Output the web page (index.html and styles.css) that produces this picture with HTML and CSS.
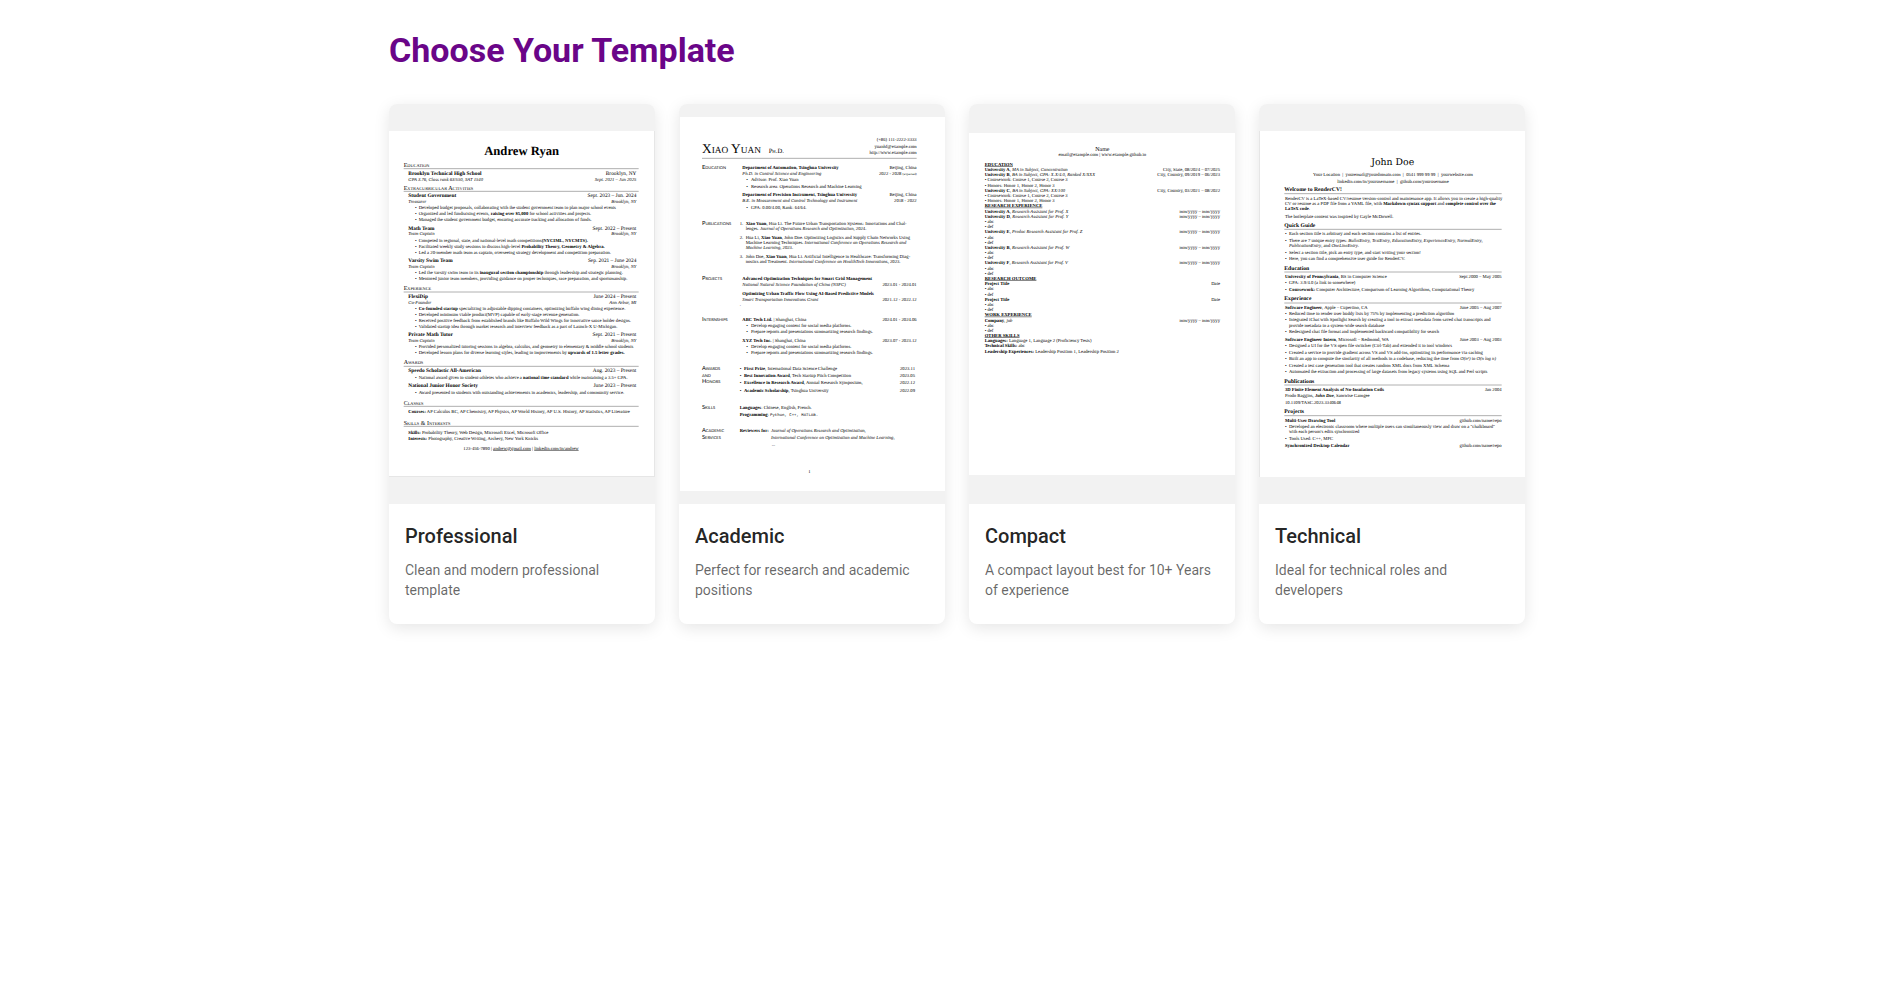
FILE: index.html
```html
<!DOCTYPE html>
<html lang="en">
<head>
<meta charset="utf-8">
<title>Choose Your Template</title>
<link rel="stylesheet" href="styles.css">
</head>
<body>
<main class="page">
<h1 class="page-title">Choose Your Template</h1>
<div class="templates">

<a class="card" href="#professional">
<svg class="preview modern" viewBox="12 12 798 1200" role="img" aria-label="Professional preview">
<rect class="edge" x="12" y="93" width="798" height="1038"/>
<rect class="sheet" x="12" y="93" width="795" height="1035"/>
<text class="name b mid" x="410" y="165">Andrew Ryan</text>
<g class="head">
<text x="56" y="201">Education</text>
<text x="56" y="269">Extracurricular Activities</text>
<text x="56" y="570">Experience</text>
<text x="56" y="793">Awards</text>
<text x="56" y="914">Classes</text>
<text x="56" y="974">Skills &amp; Interests</text>
</g>
<path class="rule" d="M56 206H761M56 274H761M56 576H761M56 799H761M56 919H761M56 979H761"/>
<g class="org b">
<text x="70" y="224">Brooklyn Technical High School</text>
<text x="70" y="292">Student Government</text>
<text x="70" y="389">Math Team</text>
<text x="70" y="485">Varsity Swim Team</text>
<text x="70" y="594">FlexiDip</text>
<text x="70" y="708">Private Math Tutor</text>
<text x="70" y="817">Speedo Scholastic All-American</text>
<text x="70" y="862">National Junior Honor Society</text>
</g>
<g class="date end">
<text x="754" y="224">Brooklyn, NY</text>
<text x="754" y="292">Sept. 2023 – Jun. 2024</text>
<text x="754" y="389">Sept. 2022 – Present</text>
<text x="754" y="485">Sep. 2021 – June 2024</text>
<text x="754" y="594">June 2024 – Present</text>
<text x="754" y="708">Sept. 2021 – Present</text>
<text x="754" y="817">Aug. 2023 – Present</text>
<text x="754" y="862">June 2023 – Present</text>
</g>
<g class="i">
<text x="70" y="242">GPA 3.76, Class rank 63/550, SAT 1540</text>
<text x="70" y="310">Treasurer</text>
<text x="70" y="406">Team Captain</text>
<text x="70" y="503">Team Captain</text>
<text x="70" y="612">Co-Founder</text>
<text x="70" y="726">Team Captain</text>
</g>
<g class="i end">
<text x="754" y="242">Sept. 2021 – Jun 2025</text>
<text x="754" y="310">Brooklyn, NY</text>
<text x="754" y="406">Brooklyn, NY</text>
<text x="754" y="503">Brooklyn, NY</text>
<text x="754" y="612">Ann Arbor, MI</text>
<text x="754" y="726">Brooklyn, NY</text>
</g>
<g>
<text x="90" y="328">•</text><text x="101" y="328">Developed budget proposals, collaborating with the student government team to plan major school events</text>
<text x="90" y="346">•</text><text x="101" y="346">Organized and led fundraising events, <tspan class="b">raising over $5,000</tspan> for school activities and projects.</text>
<text x="90" y="364">•</text><text x="101" y="364">Managed the student government budget, ensuring accurate tracking and allocation of funds.</text>
<text x="90" y="425">•</text><text x="101" y="425">Competed in regional, state, and national-level math competitions<tspan class="b">(NYCIML, NYCMTS).</tspan></text>
<text x="90" y="443">•</text><text x="101" y="443">Facilitated weekly study sessions to discuss high-level <tspan class="b">Probability Theory, Geometry &amp; Algebra.</tspan></text>
<text x="90" y="461">•</text><text x="101" y="461">Led a 20-member math team as captain, overseeing strategy development and competition preparation.</text>
<text x="90" y="522">•</text><text x="101" y="522">Led the varsity swim team to its <tspan class="b">inaugural section championship</tspan> through leadership and strategic planning.</text>
<text x="90" y="540">•</text><text x="101" y="540">Mentored junior team members, providing guidance on proper techniques, race preparation, and sportsmanship.</text>
<text x="90" y="630">•</text><text x="101" y="630"><tspan class="b">Co-founded startup</tspan> specializing in adjustable dipping containers, optimizing buffalo wing dining experience.</text>
<text x="90" y="648">•</text><text x="101" y="648">Developed minimum viable product(MVP) capable of early-stage revenue generation.</text>
<text x="90" y="666">•</text><text x="101" y="666">Received positive feedback from established brands like Buffalo Wild Wings for innovative sauce holder designs.</text>
<text x="90" y="684">•</text><text x="101" y="684">Validated startup idea through market research and interview feedback as a part of Launch-X U-Michigan.</text>
<text x="90" y="744">•</text><text x="101" y="744">Provided personalized tutoring sessions in algebra, calculus, and geometry to elementary &amp; middle school students</text>
<text x="90" y="762">•</text><text x="101" y="762">Developed lesson plans for diverse learning styles, leading to improvements by <tspan class="b">upwards of 1.5 letter grades.</tspan></text>
<text x="90" y="838">•</text><text x="101" y="838">National award given to student-athletes who achieve a <tspan class="b">national time standard</tspan> while maintaining a 3.5+ GPA.</text>
<text x="90" y="883">•</text><text x="101" y="883">Award presented to students with outstanding achievements in academics, leadership, and community service.</text>
<text x="70" y="940"><tspan class="b">Courses:</tspan> AP Calculus BC, AP Chemistry, AP Physics, AP World History, AP U.S. History, AP Statistics, AP Literature</text>
<text x="70" y="1001"><tspan class="b">Skills:</tspan> Probability Theory, Web Design, Microsoft Excel, Microsoft Office</text>
<text x="70" y="1021"><tspan class="b">Interests:</tspan> Photography, Creative Writing, Archery, New York Knicks</text>
<text class="mid" x="408" y="1050">123-456-7890 | <tspan class="u">andrew@gmail.com</tspan> | <tspan class="u">linkedin.com/in/andrew</tspan></text>
</g>
</svg>
<span class="card-body">
<span class="card-title">Professional</span>
<span class="card-text">Clean and modern professional template</span>
</span>
</a>

<a class="card" href="#academic">
<svg class="preview academic" viewBox="12 12 798 1200" role="img" aria-label="Academic preview">
<rect class="sheet" x="15" y="51" width="795" height="1122"/>
<text class="name sc" x="81" y="160">Xiao Yuan</text>
<text class="degree sc" x="281" y="160">Ph.D.</text>
<g class="end">
<text x="725" y="124">(+86) 111-2222-3333</text>
<text x="725" y="143">yuanhf@example.com</text>
<text x="725" y="162">http://www.example.com</text>
</g>
<path class="rule" d="M81 175H725"/>
<g class="head">
<text x="81" y="206">Education</text>
<text x="81" y="375">Publications</text>
<text x="81" y="539">Projects</text>
<text x="81" y="663">Internships</text>
<text x="81" y="811">Awards</text>
<text x="81" y="830">and</text>
<text x="81" y="850">Honors</text>
<text x="81" y="926">Skills</text>
<text x="81" y="997">Academic</text>
<text x="81" y="1016">Services</text>
</g>
<g class="b">
<text x="202" y="206">Department of Automation, Tsinghua University</text>
<text x="202" y="288">Department of Precision Instrument, Tsinghua University</text>
<text x="202" y="540">Advanced Optimization Techniques for Smart Grid Management</text>
<text x="202" y="585">Optimizing Urban Traffic Flow Using AI-Based Predictive Models</text>
</g>
<g class="i">
<text x="202" y="225">Ph.D. in Control Science and Engineering</text>
<text x="202" y="307">B.E. in Measurement and Control Technology and Instrument</text>
<text x="202" y="558">National Natural Science Foundation of China (NSFC)</text>
<text x="202" y="603">Smart Transportation Innovations Grant</text>
</g>
<g class="end">
<text x="725" y="206">Beijing, China</text>
<text x="725" y="225">2022 - 2028 <tspan class="tiny">(expected)</tspan></text>
<text x="725" y="288">Beijing, China</text>
<text x="725" y="307">2018 - 2022</text>
<text x="725" y="558">2023.01 - 2024.01</text>
<text x="725" y="603">2021.12 - 2022.12</text>
<text x="725" y="663">2024.01 - 2024.06</text>
<text x="725" y="725">2023.07 - 2023.12</text>
<text x="720" y="811">2023.11</text>
<text x="720" y="832">2023.05</text>
<text x="720" y="853">2022.12</text>
<text x="720" y="875">2022.09</text>
</g>
<g>
<text x="214" y="244">•</text><text x="228" y="244">Advisor: Prof. Xiao Yuan</text>
<text x="214" y="263">•</text><text x="228" y="263">Research area: Operations Research and Machine Learning</text>
<text x="214" y="326">•</text><text x="228" y="326">GPA: 0.00/4.00, Rank: 64/64.</text>
<text x="194" y="374">1.</text><text x="212" y="374"><tspan class="b">Xiao Yuan</tspan>, Hua Li. The Future Urban Transportation Systems: Innovations and Chal-</text>
<text x="212" y="390">lenges. <tspan class="i">Journal of Operations Research and Optimization</tspan>, 2024.</text>
<text x="194" y="416">2.</text><text x="212" y="416">Hua Li, <tspan class="b">Xiao Yuan</tspan>, John Doe. Optimizing Logistics and Supply Chain Networks Using</text>
<text x="212" y="432">Machine Learning Techniques. <tspan class="i">International Conference on Operations Research and</tspan></text>
<text x="212" y="448"><tspan class="i">Machine Learning</tspan>, 2023.</text>
<text x="194" y="473">3.</text><text x="212" y="473">John Doe, <tspan class="b">Xiao Yuan</tspan>, Hua Li. Artificial Intelligence in Healthcare: Transforming Diag-</text>
<text x="212" y="489">nostics and Treatment. <tspan class="i">International Conference on HealthTech Innovations</tspan>, 2023.</text>
<text x="194" y="617">.</text>
<text x="202" y="663"><tspan class="b">ABC Tech Ltd.</tspan> | Shanghai, China</text>
<text x="214" y="681">•</text><text x="228" y="681">Develop engaging content for social media platforms.</text>
<text x="214" y="700">•</text><text x="228" y="700">Prepare reports and presentations summarizing research findings.</text>
<text x="202" y="725"><tspan class="b">XYZ Tech Inc.</tspan> | Shanghai, China</text>
<text x="214" y="744">•</text><text x="228" y="744">Develop engaging content for social media platforms.</text>
<text x="214" y="762">•</text><text x="228" y="762">Prepare reports and presentations summarizing research findings.</text>
<text x="194" y="811">•</text><text x="207" y="811"><tspan class="b">First Prize</tspan>, International Data Science Challenge</text>
<text x="194" y="832">•</text><text x="207" y="832"><tspan class="b">Best Innovation Award</tspan>, Tech Startup Pitch Competition</text>
<text x="194" y="853">•</text><text x="207" y="853"><tspan class="b">Excellence in Research Award</tspan>, Annual Research Symposium,</text>
<text x="194" y="875">•</text><text x="207" y="875"><tspan class="b">Academic Scholarship</tspan>, Tsinghua University</text>
<text x="194" y="926"><tspan class="b">Languages</tspan>: Chinese, English, French.</text>
<text x="194" y="947"><tspan class="b">Programming</tspan>: <tspan class="mono">Python, C++, MATLAB.</tspan></text>
<text x="194" y="997" class="b">Reviewers for:</text>
<text x="288" y="997" class="i">Journal of Operations Research and Optimization,</text>
<text x="288" y="1018" class="i">International Conference on Optimization and Machine Learning,</text>
<text x="290" y="1039">...</text>
<text x="400" y="1120">1</text>
</g>
</svg>
<span class="card-body">
<span class="card-title">Academic</span>
<span class="card-text">Perfect for research and academic positions</span>
</span>
</a>

<a class="card" href="#compact">
<svg class="preview compact" viewBox="12 12 798 1200" role="img" aria-label="Compact preview">
<rect class="sheet" x="12" y="99" width="798" height="1026"/>
<text class="name mid" x="412" y="153">Name</text>
<text class="mid" x="412" y="169">email@example.com | www.example.github.io</text>
<g class="b u">
<text x="59" y="198">EDUCATION</text>
<text x="59" y="322">RESEARCH EXPERIENCE</text>
<text x="59" y="540">RESEARCH OUTCOME</text>
<text x="59" y="649">WORK EXPERIENCE</text>
<text x="59" y="711">OTHER SKILLS</text>
</g>
<g class="end">
<text x="765" y="213">City, State, 08/2024 – 07/2025</text>
<text x="765" y="229">City, Country, 09/2019 – 06/2023</text>
<text x="765" y="275">City, Country, 03/2021 – 08/2022</text>
<text x="765" y="338">mm/yyyy – mm/yyyy</text>
<text x="765" y="353">mm/yyyy – mm/yyyy</text>
<text x="765" y="400">mm/yyyy – mm/yyyy</text>
<text x="765" y="447">mm/yyyy – mm/yyyy</text>
<text x="765" y="493">mm/yyyy – mm/yyyy</text>
<text x="765" y="555">Date</text>
<text x="765" y="602">Date</text>
<text x="765" y="665">mm/yyyy – mm/yyyy</text>
</g>
<g>
<text x="59" y="213"><tspan class="b">University A</tspan>, <tspan class="i">MA in Subject, Concentration</tspan></text>
<text x="59" y="229"><tspan class="b">University B</tspan>, <tspan class="i">BA in Subject, GPA: X.X/4.0, Ranked X/XXX</tspan></text>
<text x="59" y="244">• Coursework: Course 1, Course 2, Course 3</text>
<text x="59" y="260">• Honors: Honor 1, Honor 2, Honor 3</text>
<text x="59" y="275"><tspan class="b">University C</tspan>, <tspan class="i">BA in Subject, GPA: XX/100</tspan></text>
<text x="59" y="291">• Coursework: Course 1, Course 2, Course 3</text>
<text x="59" y="306">• Honors: Honor 1, Honor 2, Honor 3</text>
<text x="59" y="338"><tspan class="b">University A</tspan>, <tspan class="i">Research Assistant for Prof. X</tspan></text>
<text x="59" y="353"><tspan class="b">University D</tspan>, <tspan class="i">Research Assistant for Prof. Y</tspan></text>
<text x="59" y="369">• abc</text>
<text x="59" y="384">• def</text>
<text x="59" y="400"><tspan class="b">University E</tspan>, <tspan class="i">Predoc Research Assistant for Prof. Z</tspan></text>
<text x="59" y="416">• abc</text>
<text x="59" y="431">• def</text>
<text x="59" y="447"><tspan class="b">University B</tspan>, <tspan class="i">Research Assistant for Prof. W</tspan></text>
<text x="59" y="462">• abc</text>
<text x="59" y="478">• def</text>
<text x="59" y="493"><tspan class="b">University F</tspan>, <tspan class="i">Research Assistant for Prof. V</tspan></text>
<text x="59" y="509">• abc</text>
<text x="59" y="524">• def</text>
<text x="59" y="555" class="b">Project Title</text>
<text x="59" y="571">• abc</text>
<text x="59" y="587">• def</text>
<text x="59" y="602" class="b">Project Title</text>
<text x="59" y="618">• abc</text>
<text x="59" y="633">• def</text>
<text x="59" y="665"><tspan class="b">Company</tspan>, <tspan class="i">job</tspan></text>
<text x="59" y="680">• abc</text>
<text x="59" y="696">• def</text>
<text x="59" y="727"><tspan class="b">Languages:</tspan> Language 1, Language 2 (Proficiency Tests)</text>
<text x="59" y="742"><tspan class="b">Technical Skills:</tspan> abc</text>
<text x="59" y="758"><tspan class="b">Leadership Experiences:</tspan> Leadership Position 1, Leadership Position 2</text>
</g>
</svg>
<span class="card-body">
<span class="card-title">Compact</span>
<span class="card-text">A compact layout best for 10+ Years of experience</span>
</span>
</a>

<a class="card" href="#technical">
<svg class="preview technical" viewBox="12 12 798 1200" role="img" aria-label="Technical preview">
<rect class="edge" x="12" y="93" width="4" height="1038"/>
<rect class="sheet" x="15" y="93" width="795" height="1038"/>
<text class="name mid" x="413" y="196">John Doe</text>
<text class="mid" x="414" y="227">Your Location &#160;|&#160; youremail@yourdomain.com &#160;|&#160; 0541 999 99 99 &#160;|&#160; yourwebsite.com</text>
<text class="mid" x="414" y="250">linkedin.com/in/yourusername &#160;|&#160; github.com/yourusername</text>
<g class="head b">
<text x="88" y="274">Welcome to RenderCV!</text>
<text x="88" y="382">Quick Guide</text>
<text x="88" y="509">Education</text>
<text x="88" y="601">Experience</text>
<text x="88" y="848">Publications</text>
<text x="88" y="940">Projects</text>
</g>
<path class="rule" d="M88 281H740M88 388H740M88 516H740M88 609H740M88 855H740M88 947H740"/>
<g class="end">
<text x="740" y="533">Sept 2000 – May 2005</text>
<text x="740" y="626">June 2005 – Aug 2007</text>
<text x="740" y="722">June 2003 – Aug 2003</text>
<text x="740" y="873">Jan 2004</text>
<text x="740" y="965">github.com/name/repo</text>
<text x="740" y="1042">github.com/name/repo</text>
</g>
<g>
<text x="90" y="299">RenderCV is a LaTeX-based CV/resume version-control and maintenance app. It allows you to create a high-quality</text>
<text x="90" y="314">CV or resume as a PDF file from a YAML file, with <tspan class="b">Markdown syntax support</tspan> and <tspan class="b">complete control over the</tspan></text>
<text x="90" y="330"><tspan class="b">LaTeX code</tspan>.</text>
<text x="90" y="353">The boilerplate content was inspired by Gayle McDowell.</text>
<text x="90" y="406">•</text><text x="102" y="406">Each section title is arbitrary and each section contains a list of entries.</text>
<text x="90" y="426">•</text><text x="102" y="426">There are 7 unique entry types: <tspan class="i">BulletEntry, TextEntry, EducationEntry, ExperienceEntry, NormalEntry,</tspan></text>
<text x="102" y="441"><tspan class="i">PublicationEntry</tspan>, and <tspan class="i">OneLineEntry</tspan>.</text>
<text x="90" y="461">•</text><text x="102" y="461">Select a section title, pick an entry type, and start writing your section!</text>
<text x="90" y="480">•</text><text x="102" y="480">Here, you can find a comprehensive user guide for RenderCV.</text>
<text x="90" y="533"><tspan class="b">University of Pennsylvania</tspan>, BS in Computer Science</text>
<text x="90" y="553">•</text><text x="102" y="553">GPA: 3.9/4.0 (a link to somewhere)</text>
<text x="90" y="572">•</text><text x="102" y="572"><tspan class="b">Coursework:</tspan> Computer Architecture, Comparison of Learning Algorithms, Computational Theory</text>
<text x="90" y="626"><tspan class="b">Software Engineer</tspan>, Apple – Cupertino, CA</text>
<text x="90" y="645">•</text><text x="102" y="645">Reduced time to render user buddy lists by 75% by implementing a prediction algorithm</text>
<text x="90" y="664">•</text><text x="102" y="664">Integrated iChat with Spotlight Search by creating a tool to extract metadata from saved chat transcripts and</text>
<text x="102" y="680">provide metadata to a system-wide search database</text>
<text x="90" y="700">•</text><text x="102" y="700">Redesigned chat file format and implemented backward compatibility for search</text>
<text x="90" y="722"><tspan class="b">Software Engineer Intern</tspan>, Microsoft – Redmond, WA</text>
<text x="90" y="742">•</text><text x="102" y="742">Designed a UI for the VS open file switcher (Ctrl-Tab) and extended it to tool windows</text>
<text x="90" y="761">•</text><text x="102" y="761">Created a service to provide gradient across VS and VS add-ins, optimizing its performance via caching</text>
<text x="90" y="781">•</text><text x="102" y="781">Built an app to compute the similarity of all methods in a codebase, reducing the time from <tspan class="i">O(n²)</tspan> to <tspan class="i">O(n log n)</tspan></text>
<text x="90" y="800">•</text><text x="102" y="800">Created a test case generation tool that creates random XML docs from XML Schema</text>
<text x="90" y="819">•</text><text x="102" y="819">Automated the extraction and processing of large datasets from legacy systems using SQL and Perl scripts</text>
<text x="90" y="873" class="b">3D Finite Element Analysis of No-Insulation Coils</text>
<text x="90" y="892">Frodo Baggins, <tspan class="b i">John Doe</tspan>, Samwise Gamgee</text>
<text x="90" y="911">10.1109/TASC.2023.3340648</text>
<text x="90" y="965" class="b">Multi-User Drawing Tool</text>
<text x="90" y="985">•</text><text x="102" y="985">Developed an electronic classroom where multiple users can simultaneously view and draw on a "chalkboard"</text>
<text x="102" y="1000">with each person's edits synchronized</text>
<text x="90" y="1019">•</text><text x="102" y="1019">Tools Used: C++, MFC</text>
<text x="90" y="1042" class="b">Synchronized Desktop Calendar</text>
</g>
</svg>
<span class="card-body">
<span class="card-title">Technical</span>
<span class="card-text">Ideal for technical roles and developers</span>
</span>
</a>

</div>
</main>
</body>
</html>
```
FILE: styles.css
```css
* { box-sizing: border-box; }

body {
  margin: 0;
  background: #fff;
  font-family: Roboto, "Liberation Sans", sans-serif;
  color: rgba(0, 0, 0, 0.87);
}

.page {
  max-width: 1162px;
  margin: 0 auto;
  padding: 32px 0 32px 26px;
}

.page-title {
  margin: 0 0 36px;
  font-size: 34px;
  line-height: 36px;
  font-weight: 700;
  color: #6a0588;
}

.templates {
  display: grid;
  grid-template-columns: repeat(4, 1fr);
  gap: 24px;
}

.card {
  display: flex;
  flex-direction: column;
  overflow: hidden;
  border-radius: 8px;
  background: #fff;
  box-shadow: 0 4px 16px rgba(0, 0, 0, 0.1);
  color: inherit;
  text-decoration: none;
}

.card-body {
  display: flex;
  flex-direction: column;
  gap: 8px;
  padding: 16px 16px 24px;
}

.card-title {
  font-size: 20px;
  line-height: 32px;
  font-weight: 500;
}

.card-text {
  font-size: 14px;
  line-height: 20px;
  color: rgba(0, 0, 0, 0.6);
}

/* Résumé previews */
.preview {
  display: block;
  width: 100%;
  height: auto;
  background: #f2f2f2;
  fill: #000;
  font-family: "Liberation Serif", serif;
  text-rendering: geometricPrecision;
}

.sheet { fill: #fff; }
.edge { fill: #e6e6e6; }
.rule { fill: none; stroke: #888; stroke-width: 2; }
.b { font-weight: 700; }
.i { font-style: italic; }
.u { text-decoration: underline; }
.sc { font-variant: small-caps; }
.mid { text-anchor: middle; }
.end { text-anchor: end; }
.mono { font-family: "Liberation Mono", monospace; font-size: 12px; }
.tiny { font-size: 10px; }

.modern { font-size: 14px; }
.modern .name { font-size: 38px; }
.modern .head { font-size: 18px; font-variant: small-caps; }
.modern .org { font-size: 16px; }
.modern .date { font-size: 16px; }

.academic { font-size: 14px; }
.academic .name { font-size: 40px; }
.academic .degree { font-size: 20px; }
.academic .head {
  font-family: Lato, sans-serif;
  font-size: 17px;
  font-variant: small-caps;
}

.compact { font-size: 14px; }
.compact .name { font-size: 18px; }

.technical { font-size: 14px; }
.technical .name { font-family: "DejaVu Serif", serif; font-size: 28px; }
.technical .head { font-size: 17px; }
```
